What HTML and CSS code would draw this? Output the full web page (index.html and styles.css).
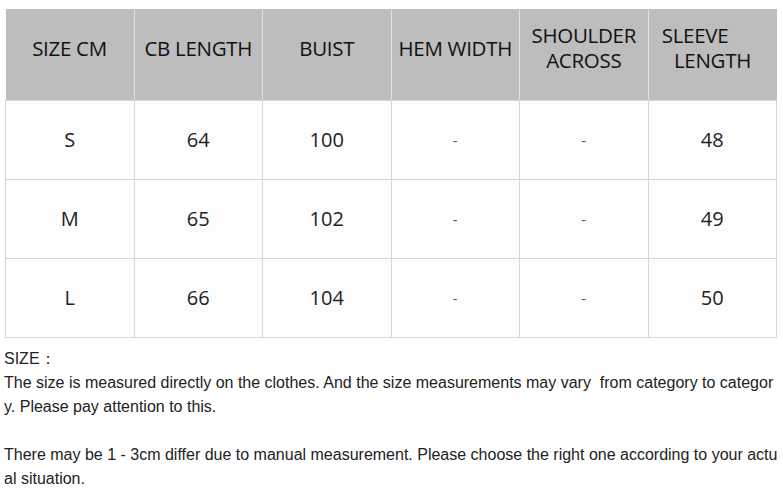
FILE: index.html
```html
<!DOCTYPE html>
<html>
<head>
<meta charset="utf-8">
<link rel="stylesheet" href="styles.css">
</head>
<body>
<div class="page">
  <table class="sizes">
    <colgroup>
      <col class="c1"><col class="c2"><col class="c3"><col class="c4"><col class="c5"><col class="c6">
    </colgroup>
    <thead>
      <tr>
        <th>SIZE CM</th>
        <th>CB LENGTH</th>
        <th>BUIST</th>
        <th>HEM WIDTH</th>
        <th><span class="line">SHOULDER</span><span class="line">ACROSS</span></th>
        <th><span class="sleeve">SLEEVE</span><span class="line">LENGTH</span></th>
      </tr>
    </thead>
    <tbody>
      <tr><td>S</td><td>64</td><td>100</td><td class="dash">-</td><td class="dash">-</td><td>48</td></tr>
      <tr><td>M</td><td>65</td><td>102</td><td class="dash">-</td><td class="dash">-</td><td>49</td></tr>
      <tr><td>L</td><td>66</td><td>104</td><td class="dash">-</td><td class="dash">-</td><td>50</td></tr>
    </tbody>
  </table>
  <div class="notes">
    <p>SIZE：<br>The size is measured directly on the clothes. And the size measurements may vary&nbsp; from category to category. Please pay attention to this.</p>
    <p>There may be 1 - 3cm differ due to manual measurement. Please choose the right one according to your actual situation.</p>
  </div>
</div>
</body>
</html>
```

FILE: styles.css
```css
html, body {
  margin: 0;
  padding: 0;
  background: #ffffff;
}

.page {
  width: 783px;
  height: 496px;
  overflow: hidden;
  padding-top: 9px;
  box-sizing: border-box;
}

.sizes {
  margin-left: 5px;
  width: 772px;
  border-collapse: collapse;
  table-layout: fixed;
  font-family: "Open Sans", "Noto Sans", sans-serif;
  color: #1a1a1a;
}

.sizes th,
.sizes td {
  text-align: center;
  padding: 0;
}

.sizes th {
  background: #bdbdbd;
  height: 91px;
  font-weight: normal;
  font-size: 20.5px;
  letter-spacing: -0.3px;
  line-height: 25px;
  padding-bottom: 12px;
  box-sizing: border-box;
  border-left: 1px solid #e2e2e2;
  border-bottom: 1px solid #d8d8d8;
  color: #111;
}

.sizes th:first-child {
  border-left: 0;
}

.sizes td {
  height: 78px;
  background: #fdfdfd;
  border: 1px solid #d6d6d6;
  font-size: 20px;
  color: #222;
}

.sizes td.dash {
  font-size: 15px;
  color: #555;
}

.sleeve {
  display: block;
  margin-right: 35px;
}

.line {
  display: block;
}

.notes {
  margin-top: 9px;
  padding-left: 4px;
  width: 775px;
  font-family: "Liberation Sans", Arial, sans-serif;
  font-size: 16px;
  line-height: 24px;
  color: #222;
  word-break: break-all;
}

.notes p {
  margin: 0 0 24px 0;
}
```
